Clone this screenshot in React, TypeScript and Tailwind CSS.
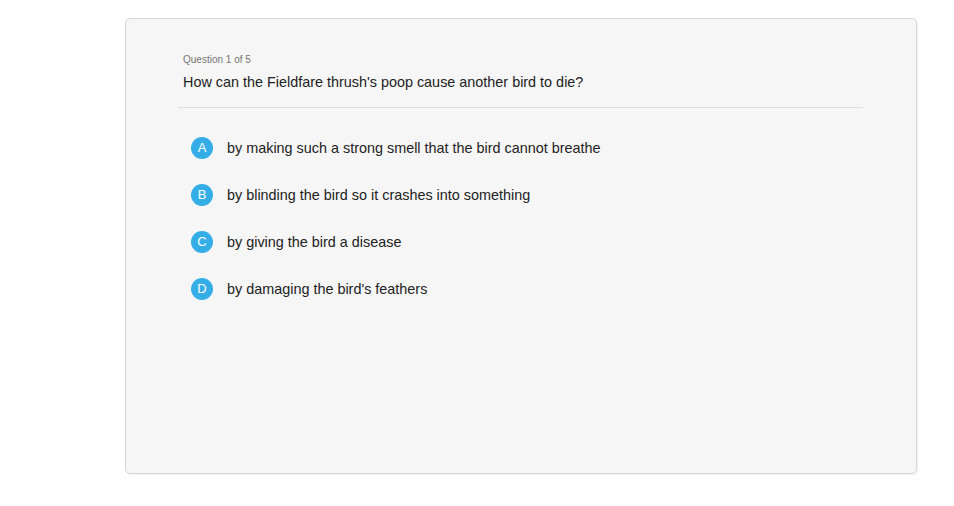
import React from 'react';

const options = [
  { letter: 'A', text: 'by making such a strong smell that the bird cannot breathe' },
  { letter: 'B', text: 'by blinding the bird so it crashes into something' },
  { letter: 'C', text: 'by giving the bird a disease' },
  { letter: 'D', text: "by damaging the bird's feathers" },
];

const App: React.FC = () => {
  return (
    <div className="w-[954px] h-[506px] bg-white" style={{ fontFamily: '"Liberation Sans", Arial, sans-serif' }}>
      <div className="pt-[18px] pl-[125px]">
        <div className="w-[792px] h-[456px] bg-[#f6f6f6] border border-[#d6d6d6] rounded-[5px] shadow-[1px_1px_2px_rgba(0,0,0,0.06)] pl-[52px] pr-[53px] pt-[35px]">
          <div className="pl-[5px]">
            <div className="text-[10px] leading-[12px] text-[#777]">Question 1 of 5</div>
            <div className="mt-[7px] text-[14.4px] leading-[18px] text-[#222]">
              How can the Fieldfare thrush's poop cause another bird to die?
            </div>
          </div>
          <div className="mt-[16px] border-t border-[#dcdcdc]" />
          <div className="pt-[29px] pl-[13px] flex flex-col gap-[25px]">
            {options.map((o) => (
              <div key={o.letter} className="flex items-center gap-[14px]">
                <div className="w-[22px] h-[22px] rounded-full bg-[#35aee8] text-white text-[13px] flex items-center justify-center">
                  {o.letter}
                </div>
                <div className="text-[14.4px] leading-[18px] text-[#222]">{o.text}</div>
              </div>
            ))}
          </div>
        </div>
      </div>
    </div>
  );
};

export default App;
